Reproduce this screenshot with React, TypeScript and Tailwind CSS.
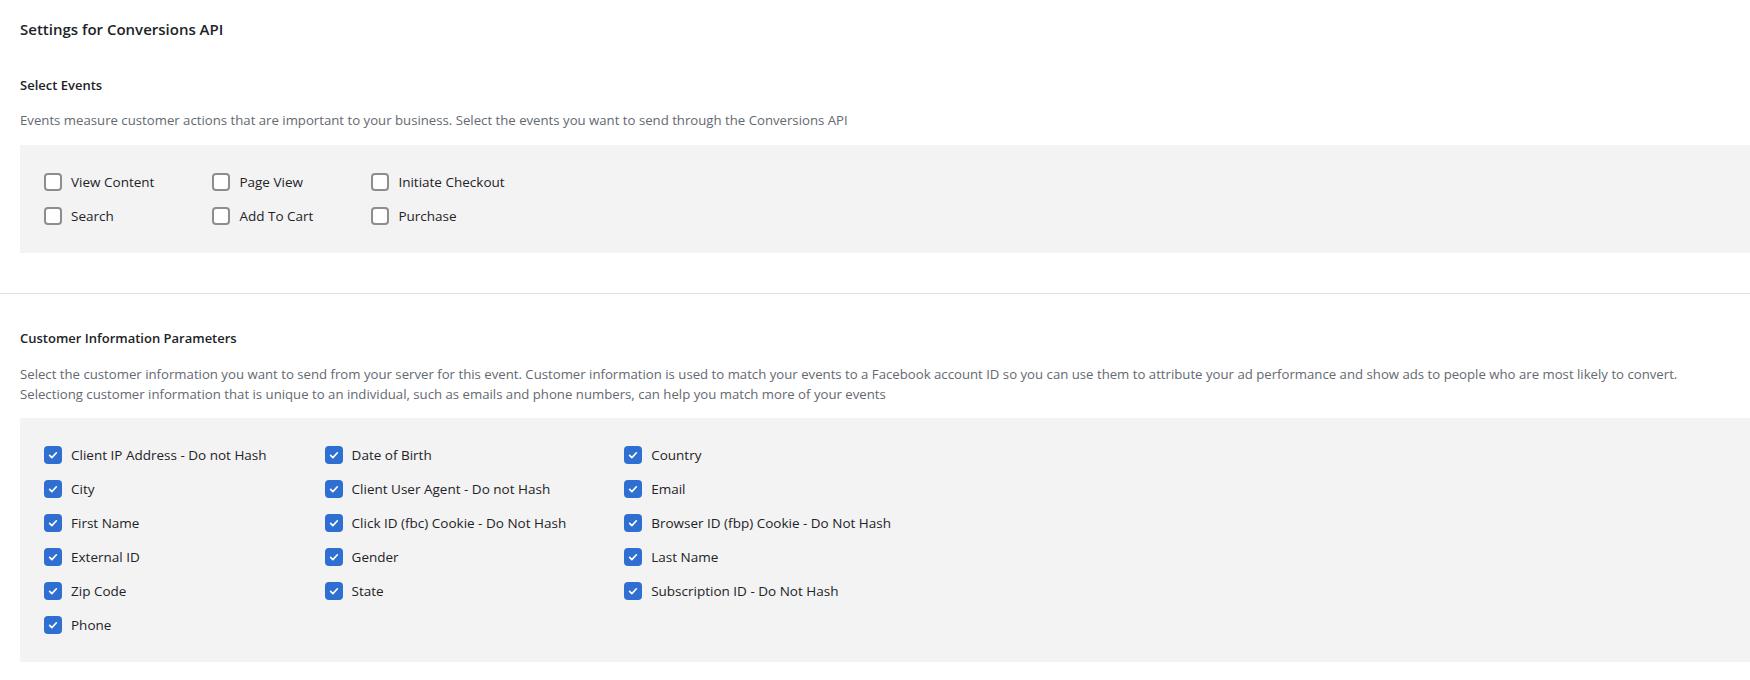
const events = [
  ["View Content", "Search"],
  ["Page View", "Add To Cart"],
  ["Initiate Checkout", "Purchase"],
];

const params = [
  ["Client IP Address - Do not Hash", "City", "First Name", "External ID", "Zip Code", "Phone"],
  ["Date of Birth", "Client User Agent - Do not Hash", "Click ID (fbc) Cookie - Do Not Hash", "Gender", "State"],
  ["Country", "Email", "Browser ID (fbp) Cookie - Do Not Hash", "Last Name", "Subscription ID - Do Not Hash"],
];

function CheckIcon() {
  return (
    <svg viewBox="0 0 16 16" className="w-3 h-3" fill="none" stroke="white" strokeWidth={2.2} strokeLinecap="round" strokeLinejoin="round">
      <path d="M3.5 8.5l3 3 6-6.5" />
    </svg>
  );
}

function Checkbox({ label, checked }: { label: string; checked?: boolean }) {
  return (
    <label className="flex items-center h-[34px] gap-[9px] whitespace-nowrap">
      {checked ? (
        <span className="w-[18px] h-[18px] rounded-[4px] bg-[#2f6fd1] flex items-center justify-center shrink-0">
          <CheckIcon />
        </span>
      ) : (
        <span className="w-[18px] h-[18px] rounded-[4px] border-2 border-[#8d8d8d] bg-white shrink-0" />
      )}
      <span className="text-[13.5px] text-[#1d2327]">{label}</span>
    </label>
  );
}

export default function App() {
  return (
    <div className="min-h-[680px] bg-white text-[#1d2327]" style={{ fontFamily: '"Open Sans", "Noto Sans", sans-serif' }}>
      <div className="pt-[19px] pb-[40px] border-b border-[#e2e2e2]">
        <h1 className="pl-[20px] text-[15px] leading-[20px] font-semibold">Settings for Conversions API</h1>
        <h2 className="pl-[20px] mt-[36px] text-[13px] leading-[20px] font-semibold">Select Events</h2>
        <p className="pl-[20px] mt-[15px] text-[13.2px] leading-[20px] text-[#646970]">
          Events measure customer actions that are important to your business. Select the events you want to send through the Conversions API
        </p>
        <div className="ml-[20px] mt-[15px] bg-[#f3f3f3] pl-[24px] py-[20px] flex gap-[58px]">
          {events.map((col, i) => (
            <div key={i} className="flex flex-col">
              {col.map((l) => (
                <Checkbox key={l} label={l} />
              ))}
            </div>
          ))}
        </div>
      </div>
      <div className="pt-[34px]">
        <h2 className="pl-[20px] text-[13px] leading-[20px] font-semibold">Customer Information Parameters</h2>
        <p className="pl-[20px] mt-[16px] text-[13.2px] leading-[20px] text-[#646970]">
          <span className="whitespace-nowrap">
            Select the customer information you want to send from your server for this event. Customer information is used to match your events to a Facebook account ID so you can use them to attribute your ad performance and show ads to people who are most likely to convert.
          </span>
          <br />
          Selectiong customer information that is unique to an individual, such as emails and phone numbers, can help you match more of your events
        </p>
        <div className="ml-[20px] mt-[14px] bg-[#f3f3f3] pl-[24px] py-[20px] flex gap-[58px]">
          {params.map((col, i) => (
            <div key={i} className="flex flex-col">
              {col.map((l) => (
                <Checkbox key={l} label={l} checked />
              ))}
            </div>
          ))}
        </div>
      </div>
    </div>
  );
}
